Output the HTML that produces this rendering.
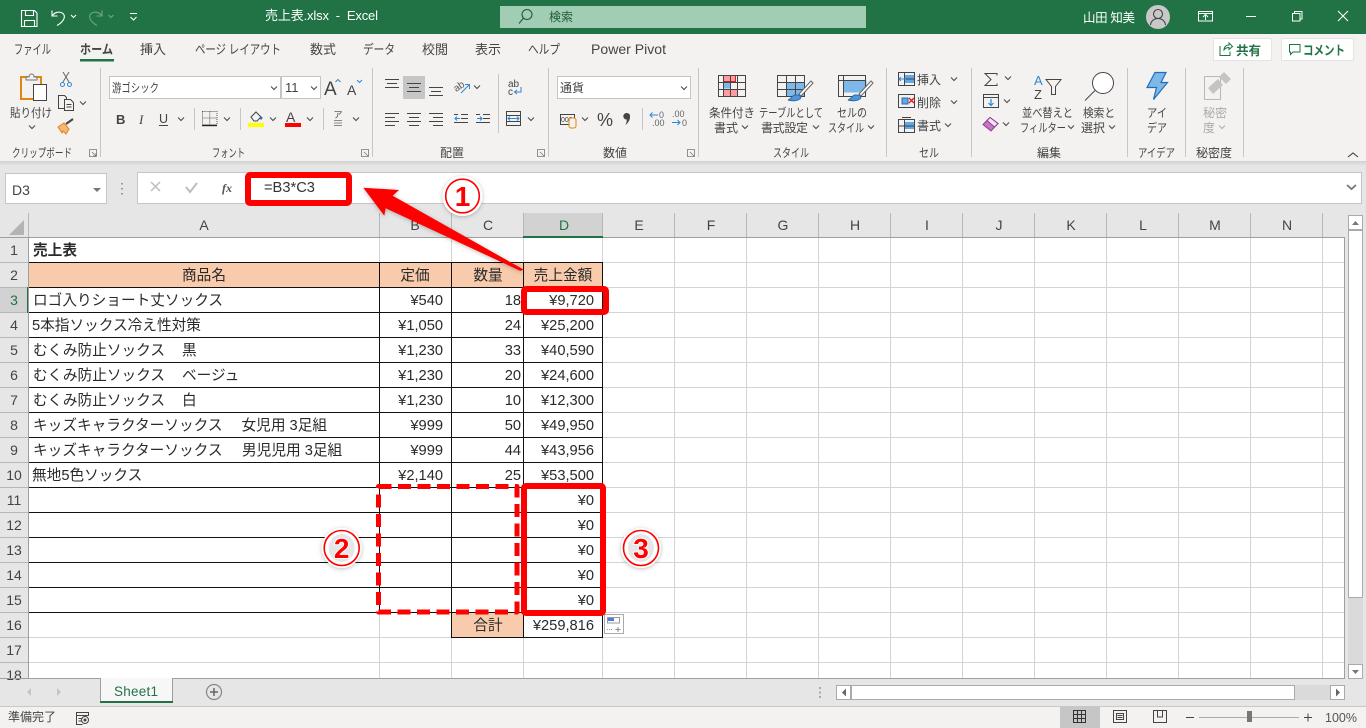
<!DOCTYPE html>
<html lang="ja"><head><meta charset="utf-8"><title>売上表.xlsx - Excel</title>
<style>
html,body{margin:0;padding:0;background:#e6e6e6;width:1366px;height:728px;overflow:hidden}
svg{display:block;font-family:"Liberation Sans","Noto Sans CJK JP",sans-serif}
.r{font-size:12px;fill:#444}
.t{font-size:13px;fill:#444}
.h{font-size:14px;fill:#444;text-anchor:middle}
.c{font-size:14.67px;fill:#2a2a2a}
.m{text-anchor:middle}
.e{text-anchor:end}
.w{fill:#fff}
.ch{fill:none;stroke:#555;stroke-width:1.2}
.ic{fill:none;stroke:#444;stroke-width:1}
</style></head><body>
<svg width="1366" height="728" viewBox="0 0 1366 728" xmlns="http://www.w3.org/2000/svg">
<defs>
<path id="v" d="M-3-1.500 0 1.500 3-1.500" fill="none" stroke="#555" stroke-width="1.200"/>
<filter id="s" x="-30%" y="-30%" width="160%" height="160%"><feDropShadow dx="0" dy="1" stdDeviation="2" flood-color="#000" flood-opacity=".25"/></filter>
<linearGradient id="sh" x1="0" y1="0" x2="0" y2="1"><stop offset="0" stop-color="#d2d2d2"/><stop offset="1" stop-color="#e6e6e6"/></linearGradient>
</defs>

<!-- title bar -->
<rect width="1366" height="34" fill="#217346"/>
<g fill="none" stroke="#fff" stroke-width="1.100">
<path d="M21.500 10.500h13l2.500 2.500v13.500h-15.500z M25.500 10.500v5h8v-5 M24.500 26.500v-6h10v6"/>
<path d="M52 10.500v5.500h5.500 M52 16c2.500-4 8-5 11-2.500 3 3 1 8-6 12"/>
<g opacity=".35"><path d="M102 10.500v5.500h-5.500 M102 16c-2.500-4-8-5-11-2.500-3 3-1 8 6 12"/><path d="M108.500 15l2.500 2.500 2.500-2.500"/></g>
<path d="M71 15l2.500 2.500 2.500-2.500"/>
<path d="M130 13.500h7 M130.500 17l3 3 3-3"/>
</g>
<text x="265" y="20" class="w" font-size="13" textLength="113" lengthAdjust="spacing" xml:space="preserve">売上表.xlsx  -  Excel</text>
<rect x="500" y="6" width="366" height="22" fill="#a0cdb3"/>
<circle cx="527" cy="14.500" r="5" fill="none" stroke="#1e5c3a" stroke-width="1.100"/><path d="M523.500 18l-4.500 5.500" stroke="#1e5c3a" stroke-width="1.100"/>
<text x="549" y="21" font-size="12" fill="#1e5c3a">検索</text>
<text x="1083" y="22" class="w" font-size="12.500" textLength="52" xml:space="preserve">山田 知美</text>
<circle cx="1158" cy="17" r="12" fill="#c8c8c8"/>
<circle cx="1158" cy="14" r="4.500" fill="none" stroke="#444" stroke-width="1.100"/><path d="M1150.500 25c.5-4.500 4-6.500 7.500-6.500s7 2 7.500 6.500" fill="none" stroke="#444" stroke-width="1.100"/>
<g fill="none" stroke="#fff" stroke-width="1">
<path d="M1198.500 11.500h14v9.500h-14z M1198.500 13.500h14 M1205.500 20v-5 M1203 17l2.500-2.500 2.500 2.500"/>
<path d="M1246 16.500h10"/>
<path d="M1292.500 13.500h7.500v7.500h-7.500z M1294.500 13.500v-2h7.500v7.500h-2"/>
<path d="M1338 11l10 10 M1348 11l-10 10" stroke-width="1.100"/>
</g>

<!-- ribbon -->
<rect y="34" width="1366" height="127" fill="#f3f2f1"/>
<rect y="161" width="1366" height="5" fill="url(#sh)"/>
<text x="14" y="54" class="t" textLength="37" lengthAdjust="spacingAndGlyphs">ファイル</text>
<text x="80" y="54" class="t" font-weight="bold" textLength="33" lengthAdjust="spacingAndGlyphs">ホーム</text>
<rect x="80" y="59" width="34" height="2.500" fill="#217346"/>
<text x="140" y="54" class="t" textLength="26">挿入</text>
<text x="195" y="54" class="t" textLength="86" lengthAdjust="spacingAndGlyphs">ページ レイアウト</text>
<text x="310" y="54" class="t" textLength="26">数式</text>
<text x="363" y="54" class="t" textLength="32" lengthAdjust="spacingAndGlyphs">データ</text>
<text x="422" y="54" class="t" textLength="26">校閲</text>
<text x="475" y="54" class="t" textLength="26">表示</text>
<text x="528" y="54" class="t" textLength="32" lengthAdjust="spacingAndGlyphs">ヘルプ</text>
<text x="591" y="54" class="t" style="font-size:14px" textLength="75" lengthAdjust="spacingAndGlyphs">Power Pivot</text>
<rect x="1213.500" y="38.500" width="58" height="22" rx="1" fill="#fff" stroke="#e6e4e2"/>
<rect x="1281.500" y="38.500" width="72" height="22" rx="1" fill="#fff" stroke="#e6e4e2"/>
<path d="M1220 46v9.500h10v-4 M1224 50c0-3 2-5 5-5v-2l3.500 3.500-3.500 3v-2c-2 0-4 1-5 2.500z" fill="none" stroke="#217346"/>
<text x="1236" y="55" font-size="12.500" font-weight="bold" fill="#217346">共有</text>
<path d="M1289.500 44.500h10.500v7.500h-7l-2.500 2.500v-2.500h-1z" fill="none" stroke="#217346"/>
<text x="1303" y="55" font-size="13" font-weight="bold" fill="#217346" textLength="42" lengthAdjust="spacingAndGlyphs">コメント</text>

<g fill="#c8c6c4">
<rect x="100" y="68" width="1" height="89"/><rect x="372" y="68" width="1" height="89"/><rect x="548" y="68" width="1" height="89"/><rect x="698" y="68" width="1" height="89"/><rect x="886" y="68" width="1" height="89"/><rect x="971" y="68" width="1" height="89"/><rect x="1127" y="68" width="1" height="89"/><rect x="1185" y="68" width="1" height="89"/><rect x="1243" y="68" width="1" height="89"/>
<rect x="194" y="108" width="1" height="22"/><rect x="240" y="108" width="1" height="22"/><rect x="323" y="108" width="1" height="22"/><rect x="498" y="74" width="1" height="59"/><rect x="642" y="108" width="1" height="22"/>
</g>
<!-- clipboard -->
<rect x="21" y="77" width="20" height="22" fill="#f3f2f1" stroke="#e3860f" stroke-width="2"/>
<path d="M26 80v-3h3c0-4 5-4 5 0h3v3z" fill="#f3f2f1" stroke="#777"/>
<rect x="33.500" y="84.500" width="13" height="16" fill="#fff" stroke="#444"/>
<text x="10" y="117" class="r" textLength="42" lengthAdjust="spacingAndGlyphs">貼り付け</text>
<use href="#v" x="32" y="127"/>
<path d="M63 82l6-10 M69 82l-6-10" stroke="#666" fill="none"/>
<circle cx="62.500" cy="84.500" r="2" fill="none" stroke="#2b88d8"/><circle cx="69.500" cy="84.500" r="2" fill="none" stroke="#2b88d8"/>
<path d="M58.500 95.500h6l2 2v11h-8z" fill="none" stroke="#444"/><path d="M64.500 99.500h6l3 3v8h-9z M66.500 104.500h5 M66.500 107h5" fill="#f3f2f1" stroke="#444"/>
<use href="#v" x="83" y="103"/>
<path d="M58 127l6-4 5 6-3 5-3-3-1 2z" fill="#f4b67a" stroke="#e3860f"/><path d="M66 124l7-5" stroke="#444" stroke-width="2"/>
<text x="12" y="157" class="r" textLength="60" lengthAdjust="spacingAndGlyphs">クリップボード</text>
<path d="M89.500 149.500h7v7 M92 152l4 4 M93 156h3v-3 M89.500 149.500v7h7" fill="none" stroke="#777" stroke-width=".8"/>

<!-- font -->
<rect x="109.500" y="76.500" width="171" height="22" fill="#fff" stroke="#c4c4c4"/>
<rect x="281.500" y="76.500" width="39" height="22" fill="#fff" stroke="#c4c4c4"/>
<text x="112" y="92" class="r" textLength="47" lengthAdjust="spacingAndGlyphs">游ゴシック</text>
<text x="285" y="92" font-size="13" fill="#444">11</text>
<use href="#v" x="274" y="88"/><use href="#v" x="314" y="88"/>
<text x="324" y="95" font-size="19" fill="#444">A</text><path d="M335.500 82l2.500-2.500 2.500 2.500" fill="none" stroke="#2b88d8"/>
<text x="347" y="95" font-size="14" fill="#444">A</text><path d="M357 80l2.500 2.500 2.500-2.500" fill="none" stroke="#2b88d8"/>
<text x="116" y="124" font-size="13" font-weight="bold" fill="#444">B</text>
<text x="139" y="124" font-size="13" font-style="italic" fill="#444" font-family="Liberation Serif">I</text>
<text x="159" y="123" font-size="12.500" fill="#444">U</text><rect x="159" y="125" width="9" height="1" fill="#444"/>
<use href="#v" x="181" y="119"/>
<path d="M202.500 111.500h14.500v13h-14.500z M209.700 111.500v13 M202.500 118h14.500" fill="none" stroke="#555" stroke-dasharray="1 1"/><rect x="202" y="125" width="15" height="1.200" fill="#222"/>
<use href="#v" x="227" y="119"/>
<path d="M251 117l5-5 5 5-4 4h-3z" fill="none" stroke="#444"/><circle cx="261" cy="118" r="1.500" fill="#2b6ca3"/>
<rect x="248" y="123" width="16" height="4" fill="#ffff00"/>
<use href="#v" x="273" y="119"/>
<text x="286" y="122" font-size="14" fill="#444">A</text><rect x="285" y="123" width="16" height="4" fill="#f00"/>
<use href="#v" x="310" y="119"/>
<text x="338" y="118" class="r m" style="font-size:9px">ア</text><path d="M334 120.500h8 M334 123h8 M334 125.500h8" stroke="#888"/>
<use href="#v" x="356" y="119"/>
<text x="212" y="157" class="r" textLength="33" lengthAdjust="spacingAndGlyphs">フォント</text>
<path d="M361.500 149.500h7v7h-7z M364 152l4 4" fill="none" stroke="#777" stroke-width=".8"/>

<!-- alignment -->
<rect x="403" y="76" width="22" height="23" fill="#c6c6c6"/>
<g stroke="#444" fill="none">
<path d="M385 79.500h14 M387 83.500h10 M385 87.500h14"/>
<path d="M407 83.500h14 M409 87.500h10 M407 91.500h14"/>
<path d="M429 87.500h14 M431 91.500h10 M429 95.500h14"/>
<path d="M385 113.500h14 M385 117.500h10 M385 121.500h14 M385 125.500h10"/>
<path d="M407 113.500h14 M409 117.500h10 M407 121.500h14 M409 125.500h10"/>
<path d="M429 113.500h14 M433 117.500h10 M429 121.500h14 M433 125.500h10"/>
<path d="M461 114.500h7 M461 118.500h7 M454 122.500h14 M454 114.500h4"/>
<path d="M483 114.500h7 M483 118.500h7 M476 122.500h14 M476 114.500h4"/>
</g>
<path d="M455 118.500h5 M457 116.500l-2 2 2 2 M477 118.500h5 M480 116.500l2 2-2 2" fill="none" stroke="#2b88d8"/>
<text x="453" y="90" font-size="10" fill="#555" transform="rotate(-35 458 86)">ab</text><path d="M461 93l8-8 M465 84.500h4.500v4.500" fill="none" stroke="#2b88d8"/>
<use href="#v" x="477" y="87"/>
<text x="508" y="87" font-size="10" fill="#444">ab</text><text x="508" y="95" font-size="10" fill="#444">c</text><path d="M521 87v5h-6 M517 90l-2.500 2 2.500 2" fill="none" stroke="#2b88d8"/>
<path d="M506.500 111.500h14v14h-14z M506.500 115.500h14 M506.500 121.500h14" fill="none" stroke="#444"/><path d="M508.500 118.500h10 M510 116.500l-2 2 2 2 M517 116.500l2 2-2 2" fill="none" stroke="#2b88d8"/>
<use href="#v" x="531" y="119"/>
<text x="440" y="157" class="r" textLength="24">配置</text>
<path d="M537.500 149.500h7v7h-7z M540 152l4 4" fill="none" stroke="#777" stroke-width=".8"/>

<!-- number -->
<rect x="557.500" y="76.500" width="133" height="22" fill="#fff" stroke="#c4c4c4"/>
<text x="560" y="92" class="r">通貨</text>
<use href="#v" x="684" y="88"/>
<path d="M560.500 114.500h14v10h-14z" fill="none" stroke="#444"/><text x="561" y="122" font-size="7" fill="#444">000</text>
<rect x="569" y="118" width="7" height="10" rx="2" fill="#f3f2f1" stroke="#e3860f"/>
<use href="#v" x="585" y="119"/>
<text x="597" y="126" font-size="18" fill="#444">%</text>
<path d="M627 113a3.200 3.200 0 0 1 3 4c0 3-2 6-4.500 8 .8-2 1.300-3.500 1.300-5.500a3.200 3.200 0 0 1-.5-6.500z" fill="#444"/>
<text x="659" y="118" font-size="9" fill="#666">0</text><text x="652" y="126" font-size="9" fill="#666">.00</text>
<text x="672" y="117" font-size="9" fill="#666">.00</text><text x="682" y="126" font-size="9" fill="#666">0</text>
<path d="M650 115h8 M652.500 112.500l-2.500 2.500 2.500 2.500 M672 122.500h8 M677.500 120l2.500 2.500-2.500 2.500" fill="none" stroke="#2b88d8"/>
<text x="603" y="157" class="r" textLength="24">数値</text>
<path d="M687.500 149.500h7v7h-7z M690 152l4 4" fill="none" stroke="#777" stroke-width=".8"/>

<!-- styles -->
<rect x="723.500" y="75.500" width="12" height="6" fill="#ff9a9f" stroke="#d21f2a"/>
<rect x="723.500" y="89.500" width="14" height="7" fill="#ff9a9f" stroke="#d21f2a"/>
<rect x="723.500" y="82.500" width="7" height="6" fill="#7eb8e8"/>
<path d="M718.500 75.500h27v21h-27z M718.500 82.500h27 M718.500 89.500h27 M723.500 75.500v21 M730.500 75.500v21 M737.500 75.500v21" fill="none" stroke="#444"/>
<rect x="786.500" y="82.500" width="18" height="14" fill="#7eb8e8"/>
<path d="M777.500 75.500h27v21h-27z M777.500 82.500h27 M777.500 89.500h27 M786.500 75.500v21 M795.500 75.500v21" fill="none" stroke="#444"/>
<path d="M813 83l-12 13-2-2 12-13z" fill="#fff" stroke="#666"/><path d="M797 95c3 0 5 2 3 4-3 2-8 2-12 1 4-1 4-6 9-5z" fill="#4e95d9" stroke="#2b6ca3"/>
<rect x="843.500" y="80.500" width="23" height="12" fill="#7eb8e8"/>
<path d="M838.500 75.500h27v21h-27z M838.500 80.500h27 M843.500 75.500v21" fill="none" stroke="#444"/>
<path d="M873 83l-12 13-2-2 12-13z" fill="#fff" stroke="#666"/><path d="M857 95c3 0 5 2 3 4-3 2-8 2-12 1 4-1 4-6 9-5z" fill="#4e95d9" stroke="#2b6ca3"/>
<text x="709" y="117" class="r" textLength="46" lengthAdjust="spacingAndGlyphs">条件付き</text>
<text x="714" y="132" class="r" textLength="24">書式</text><use href="#v" x="745" y="127"/>
<text x="759" y="117" class="r" textLength="64" lengthAdjust="spacingAndGlyphs">テーブルとして</text>
<text x="761" y="132" class="r" textLength="47">書式設定</text><use href="#v" x="816" y="127"/>
<text x="837" y="117" class="r" textLength="30" lengthAdjust="spacingAndGlyphs">セルの</text>
<text x="828" y="132" class="r" textLength="36" lengthAdjust="spacingAndGlyphs">スタイル</text><use href="#v" x="871" y="127"/>
<text x="773" y="157" class="r" textLength="36" lengthAdjust="spacingAndGlyphs">スタイル</text>

<!-- cells -->
<rect x="904" y="75" width="10" height="8" fill="#5ea9e6"/><path d="M898.500 72.500h16v13h-16z M898.500 79h16 M904.500 72.500v13" fill="none" stroke="#444"/><path d="M899 79h7 M901 77l-2 2 2 2" stroke="#2b88d8" fill="none"/>
<rect x="902" y="98" width="6" height="6" fill="#5ea9e6" stroke="#2b6ca3"/><path d="M898.500 94.500h16v13h-16z" fill="none" stroke="#444"/><path d="M909 98l5 5 M914 98l-5 5" stroke="#e81123" fill="none" stroke-width="1.300"/>
<rect x="904" y="122" width="10" height="7" fill="#5ea9e6"/><path d="M898.500 119.500h16v13h-16z M898.500 126h16 M904.500 119.500v13 M902 117.500h9" fill="none" stroke="#444"/>
<text x="917" y="84" class="r">挿入</text><text x="917" y="107" class="r">削除</text><text x="917" y="130" class="r">書式</text>
<use href="#v" x="954" y="79"/><use href="#v" x="954" y="102"/><use href="#v" x="948" y="125"/>
<text x="919" y="157" class="r" textLength="20" lengthAdjust="spacingAndGlyphs">セル</text>

<!-- editing -->
<path d="M997 75.500v-2h-12l6 6-6 6h12v-2" fill="none" stroke="#444"/><use href="#v" x="1008" y="78"/>
<path d="M983.500 94.500h15v13h-15z M983.500 97.500h15" fill="none" stroke="#444"/><path d="M991 99v6 M988.500 103l2.500 2.500 2.500-2.500" fill="none" stroke="#2b88d8" stroke-width="1.200"/><use href="#v" x="1007" y="101"/>
<path d="M983 124.500l7-7 8 6-7 7.500z" fill="#c774c7" stroke="#8f3a8f"/><path d="M990 117.500l8 6-3.500 3.500-7.500-6.500z" fill="#f3e6f3" stroke="#8f3a8f"/><use href="#v" x="1006" y="124"/>
<text x="1034" y="85" font-size="13" fill="#2b88d8">A</text><text x="1034" y="99" font-size="13" fill="#444">Z</text>
<path d="M1046 79.500h15l-5.500 7v8l-4 0v-8z" fill="none" stroke="#444"/>
<circle cx="1103" cy="83" r="10.500" fill="#fff" stroke="#444"/><path d="M1095 90.500l-10 10" stroke="#444"/>
<text x="1022" y="117" class="r" textLength="51" lengthAdjust="spacingAndGlyphs">並べ替えと</text>
<text x="1020" y="132" class="r" textLength="46" lengthAdjust="spacingAndGlyphs">フィルター</text><use href="#v" x="1071" y="127"/>
<text x="1083" y="117" class="r" textLength="32" lengthAdjust="spacingAndGlyphs">検索と</text>
<text x="1081" y="132" class="r" textLength="24">選択</text><use href="#v" x="1112" y="127"/>
<text x="1037" y="157" class="r" textLength="24">編集</text>

<!-- ideas -->
<path d="M1155 72.500h11l-5 10h6.500l-14 17 3-12h-9.500z" fill="#7eb8e8" stroke="#1e6fb8" stroke-width="1.200"/>
<text x="1147" y="117" class="r" textLength="20" lengthAdjust="spacingAndGlyphs">アイ</text>
<text x="1147" y="132" class="r" textLength="20" lengthAdjust="spacingAndGlyphs">デア</text>
<text x="1138" y="157" class="r" textLength="37" lengthAdjust="spacingAndGlyphs">アイデア</text>
<!-- sensitivity -->
<path d="M1204.500 76.500h16v23h-16z" fill="none" stroke="#b8b8b8"/>
<path d="M1208 88l10-9 5 6-10 9z" fill="#c4c4c4"/><path d="M1219 77l5-5 7 7-5 5z" fill="#c4c4c4"/>
<text x="1203" y="117" font-size="12" fill="#aaa" textLength="24">秘密</text>
<text x="1203" y="132" font-size="12" fill="#aaa">度</text><use href="#v" x="1222" y="127" opacity=".4"/>
<text x="1196" y="157" class="r" textLength="36">秘密度</text>
<path d="M1348 157l5-4 5 4" fill="none" stroke="#444" stroke-width="1.100"/>

<!-- formula bar -->
<rect x="5.500" y="173.500" width="101" height="30" fill="#fff" stroke="#c6c6c6"/>
<text x="12" y="195" font-size="14" fill="#444">D3</text>
<path d="M93 188h8l-4 4z" fill="#777"/>
<path d="M122 183v1.500 M122 188v1.500 M122 193v1.500" stroke="#999" stroke-width="2"/>
<rect x="137.500" y="172.500" width="1224" height="31" fill="#fff" stroke="#c6c6c6"/>
<path d="M151 182l9 9 M160 182l-9 9" stroke="#bdbdbd" stroke-width="1.500"/>
<path d="M186 187l4 5 7-9" fill="none" stroke="#bdbdbd" stroke-width="2"/>
<text x="222" y="192" font-size="12" font-style="italic" font-weight="bold" fill="#555" font-family="Liberation Serif">fx</text>
<text x="264" y="192" font-size="14.670" fill="#333">=B3*C3</text>
<path d="M1347 185l4.500 4 4.500-4" fill="none" stroke="#777" stroke-width="1.800"/>

<!-- headers -->
<rect y="213" width="1366" height="465" fill="#e6e6e6"/>
<path d="M24 220v15H9z" fill="#b4b4b4"/>
<rect x="523" y="213" width="80" height="24" fill="#d2d2d2"/>
<rect x="0" y="288" width="28" height="24" fill="#d2d2d2"/>
<g stroke="#b8b8b8">
<path d="M28.500 213v24 M379.500 213v24 M451.500 213v24 M523.500 213v24 M602.500 213v24 M674.500 213v24 M746.500 213v24 M818.500 213v24 M890.500 213v24 M962.500 213v24 M1034.500 213v24 M1106.500 213v24 M1178.500 213v24 M1250.500 213v24 M1322.500 213v24"/>
<path d="M0 262.500h28 M0 287.500h28 M0 312.500h28 M0 337.500h28 M0 362.500h28 M0 387.500h28 M0 412.500h28 M0 437.500h28 M0 462.500h28 M0 487.500h28 M0 512.500h28 M0 537.500h28 M0 562.500h28 M0 587.500h28 M0 612.500h28 M0 637.500h28 M0 662.500h28"/>
</g>
<g class="h">
<text class="h" x="204" y="230">A</text><text class="h" x="415" y="230">B</text><text class="h" x="488" y="230">C</text><text class="h" x="564" y="230" style="fill:#217346">D</text><text class="h" x="639" y="230">E</text><text class="h" x="711" y="230">F</text><text class="h" x="783" y="230">G</text><text class="h" x="855" y="230">H</text><text class="h" x="927" y="230">I</text><text class="h" x="999" y="230">J</text><text class="h" x="1071" y="230">K</text><text class="h" x="1143" y="230">L</text><text class="h" x="1215" y="230">M</text><text class="h" x="1287" y="230">N</text>
</g>
<g>
<text class="h" x="14" y="255">1</text><text class="h" x="14" y="280">2</text><text class="h" x="14" y="305" style="fill:#217346">3</text><text class="h" x="14" y="330">4</text><text class="h" x="14" y="355">5</text><text class="h" x="14" y="380">6</text><text class="h" x="14" y="405">7</text><text class="h" x="14" y="430">8</text><text class="h" x="14" y="455">9</text><text class="h" x="14" y="480">10</text><text class="h" x="14" y="505">11</text><text class="h" x="14" y="530">12</text><text class="h" x="14" y="555">13</text><text class="h" x="14" y="580">14</text><text class="h" x="14" y="605">15</text><text class="h" x="14" y="630">16</text><text class="h" x="14" y="655">17</text><text class="h" x="14" y="680">18</text>
</g>

<!-- sheet -->
<rect x="29" y="237" width="1315" height="441" fill="#fff"/>
<rect x="29" y="263" width="574" height="24" fill="#f8cbad"/>
<rect x="452" y="613" width="71" height="24" fill="#f8cbad"/>
<g stroke="#d4d4d4">
<path d="M379.500 237v441 M451.500 237v441 M523.500 237v441 M602.500 237v441 M674.500 237v441 M746.500 237v441 M818.500 237v441 M890.500 237v441 M962.500 237v441 M1034.500 237v441 M1106.500 237v441 M1178.500 237v441 M1250.500 237v441 M1322.500 237v441"/>
<path d="M29 262.500h1315 M29 287.500h1315 M29 312.500h1315 M29 337.500h1315 M29 362.500h1315 M29 387.500h1315 M29 412.500h1315 M29 437.500h1315 M29 462.500h1315 M29 487.500h1315 M29 512.500h1315 M29 537.500h1315 M29 562.500h1315 M29 587.500h1315 M29 612.500h1315 M29 637.500h1315 M29 662.500h1315"/>
</g>
<g stroke="#111">
<path d="M29 262.500h574 M29 287.500h574 M29 312.500h574 M29 337.500h574 M29 362.500h574 M29 387.500h574 M29 412.500h574 M29 437.500h574 M29 462.500h574 M29 487.500h574 M29 512.500h574 M29 537.500h574 M29 562.500h574 M29 587.500h574 M29 612.500h574 M451 637.500h152"/>
<path d="M379.500 262v351 M451.500 262v376 M523.500 262v376 M602.500 262v376"/>
</g>
<rect x="27" y="287" width="2" height="26" fill="#217346"/>
<path d="M28.500 237V678 M0 237.500h523 M603 237.500h742 M1344.500 237v442 M0 678.500h1345" stroke="#9f9f9f" fill="none"/>
<rect x="523" y="236" width="80" height="2" fill="#217346"/>

<!-- cells text -->
<text class="c" x="33" y="255" font-weight="bold">売上表</text>
<text class="c m" x="204" y="280">商品名</text><text class="c m" x="415" y="280">定価</text><text class="c m" x="488" y="280">数量</text><text class="c m" x="563" y="280">売上金額</text>
<text class="c" x="33" y="305">ロゴ入りショート丈ソックス</text>
<text class="c" x="32" y="330">5本指ソックス冷え性対策</text>
<text class="c" x="33" y="355">むくみ防止ソックス　<tspan x="182">黒</tspan></text>
<text class="c" x="33" y="380">むくみ防止ソックス　<tspan x="182">ベージュ</tspan></text>
<text class="c" x="33" y="405">むくみ防止ソックス　<tspan x="182">白</tspan></text>
<text class="c" x="33" y="430">キッズキャラクターソックス　<tspan x="241.500">女児用 3足組</tspan></text>
<text class="c" x="33" y="455">キッズキャラクターソックス　<tspan x="242">男児児用 3足組</tspan></text>
<text class="c" x="32" y="480">無地5色ソックス</text>
<text class="c e" x="443" y="305">¥540</text><text class="c e" x="521" y="305">18</text><text class="c e" x="594" y="305">¥9,720</text>
<text class="c e" x="443" y="330">¥1,050</text><text class="c e" x="521" y="330">24</text><text class="c e" x="594" y="330">¥25,200</text>
<text class="c e" x="443" y="355">¥1,230</text><text class="c e" x="521" y="355">33</text><text class="c e" x="594" y="355">¥40,590</text>
<text class="c e" x="443" y="380">¥1,230</text><text class="c e" x="521" y="380">20</text><text class="c e" x="594" y="380">¥24,600</text>
<text class="c e" x="443" y="405">¥1,230</text><text class="c e" x="521" y="405">10</text><text class="c e" x="594" y="405">¥12,300</text>
<text class="c e" x="443" y="430">¥999</text><text class="c e" x="521" y="430">50</text><text class="c e" x="594" y="430">¥49,950</text>
<text class="c e" x="443" y="455">¥999</text><text class="c e" x="521" y="455">44</text><text class="c e" x="594" y="455">¥43,956</text>
<text class="c e" x="443" y="480">¥2,140</text><text class="c e" x="521" y="480">25</text><text class="c e" x="594" y="480">¥53,500</text>
<text class="c e" x="594" y="505">¥0</text><text class="c e" x="594" y="530">¥0</text><text class="c e" x="594" y="555">¥0</text><text class="c e" x="594" y="580">¥0</text><text class="c e" x="594" y="605">¥0</text>
<text class="c m" x="488" y="630">合計</text><text class="c e" x="594" y="630">¥259,816</text>

<!-- paste options -->
<rect x="604.500" y="614.500" width="19" height="19" fill="#fff" stroke="#aaa"/>
<rect x="607" y="617" width="7" height="4" fill="#4a7fe0"/><path d="M607.500 617.500h12v5.500h-12z" fill="none" stroke="#999"/><path d="M607 629.500h6" stroke="#999" stroke-dasharray="1 1"/><path d="M615.500 629.500h5 M618 627v5" stroke="#888"/>

<!-- scrollbars -->
<rect x="1348" y="215" width="15" height="463" fill="#dadada"/>
<rect x="1348.500" y="215.500" width="14" height="14" fill="#fff" stroke="#aaa"/>
<path d="M1352 225h7l-3.500-4z" fill="#777"/>
<rect x="1348.500" y="230.500" width="14" height="367" fill="#fff" stroke="#aaa"/>
<rect x="1348.500" y="664.500" width="14" height="14" fill="#fff" stroke="#aaa"/>
<path d="M1352 670h7l-3.500 4z" fill="#777"/>

<!-- tabs -->
<path d="M0 678.500h100" stroke="#9f9f9f"/>
<rect x="100" y="678" width="73" height="24" fill="#f7f7f7"/>
<path d="M100.500 678v24 M172.500 678v24" stroke="#9f9f9f"/>
<rect x="100" y="701" width="73" height="2" fill="#217346"/>
<text x="114" y="696" font-size="13.500" fill="#217346" textLength="44">Sheet1</text>
<path d="M31 688v8l-4-4z M57 688v8l4-4z" fill="#c4c4c4"/>
<circle cx="214" cy="692" r="7.500" fill="none" stroke="#888" stroke-width="1.200"/><path d="M210 692h8 M214 688v8" stroke="#666" stroke-width="1.500"/>
<path d="M820 687v2 M820 691.500v2 M820 696v2" stroke="#aaa" stroke-width="2"/>
<rect x="836" y="685" width="509" height="15" fill="#dadada"/>
<rect x="836.500" y="685.500" width="14" height="14" fill="#fff" stroke="#aaa"/>
<path d="M846 688.500v8l-4-4z" fill="#666"/>
<rect x="851.500" y="685.500" width="443" height="14" fill="#fff" stroke="#aaa"/>
<rect x="1330.500" y="685.500" width="14" height="14" fill="#fff" stroke="#aaa"/>
<path d="M1336 688.500v8l4-4z" fill="#666"/>

<!-- status bar -->
<rect y="706" width="1366" height="22" fill="#f3f2f1"/>
<rect y="706" width="1366" height="1" fill="#c8c8c8"/>
<text x="8" y="721" font-size="12" fill="#444">準備完了</text>
<path d="M76.500 712.500h12v3h-12z M76.500 715.500v9h6 M78.500 718.500h4 M78.500 721h3" fill="none" stroke="#444"/>
<circle cx="85" cy="720" r="3.500" fill="none" stroke="#444"/><circle cx="85" cy="720" r="1.500" fill="#444"/>
<rect x="1060" y="707" width="40" height="21" fill="#c6c6c6"/>
<path d="M1073.500 710.500h12v12h-12z M1073.500 714.500h12 M1073.500 718.500h12 M1077.500 710.500v12 M1081.500 710.500v12" fill="none" stroke="#333"/>
<path d="M1113.500 710.500h13v12h-13z M1116.500 713.500h7v6h-7z M1117.500 715.500h5 M1117.500 717.500h5" fill="none" stroke="#444"/>
<path d="M1153.500 710.500h13v12h-13z M1157.500 710.500v6.500h5v-6.500" fill="none" stroke="#444"/>
<path d="M1186 717.500h8 M1304 717.500h8 M1308 713.500v8" stroke="#444"/>
<rect x="1199" y="717" width="100" height="1" fill="#aaa"/>
<rect x="1247" y="711" width="5" height="11" fill="#777"/>
<text x="1325" y="722" font-size="12.500" fill="#555">100%</text>

<!-- annotations -->
<g fill="none" stroke="#f00" stroke-linejoin="round">
<rect x="248" y="175" width="101" height="28" rx="2" stroke-width="6"/>
<rect x="524" y="289" width="82" height="23" rx="2" stroke-width="6"/>
<rect x="524" y="486" width="79" height="127" rx="2" stroke-width="6"/>
<rect x="378.500" y="486.500" width="138.500" height="125.500" stroke-width="5" stroke-dasharray="13 6.500"/>
</g>
<path d="M363.300 187.700L399 190l-6.300 5.700L523.500 269.500l-3 1.500-134.800-62.700-1.400 7.400z" fill="#f00" filter="url(#s)"/>
<g filter="url(#s)">
<circle cx="462.500" cy="196" r="20" fill="#fff"/>
<circle cx="341.700" cy="548" r="20" fill="#fff"/>
<circle cx="641" cy="548" r="20" fill="#fff"/>
</g>
<ellipse cx="341.700" cy="548" rx="13" ry="14" fill="#e6e6e6"/><ellipse cx="641" cy="548" rx="13" ry="14" fill="#e6e6e6"/>
<g fill="none" stroke="#f00" stroke-width="1.600">
<circle cx="462.500" cy="196" r="16.800"/><circle cx="341.700" cy="548" r="17.500"/><circle cx="641" cy="548" r="17.500"/>
</g>
<g font-size="28" font-weight="bold" fill="#f00" text-anchor="middle" stroke="#fff" stroke-width="2" paint-order="stroke">
<text x="462.500" y="206">1</text><text x="341.700" y="558">2</text><text x="641" y="558">3</text>
</g>
</svg>
</body></html>
